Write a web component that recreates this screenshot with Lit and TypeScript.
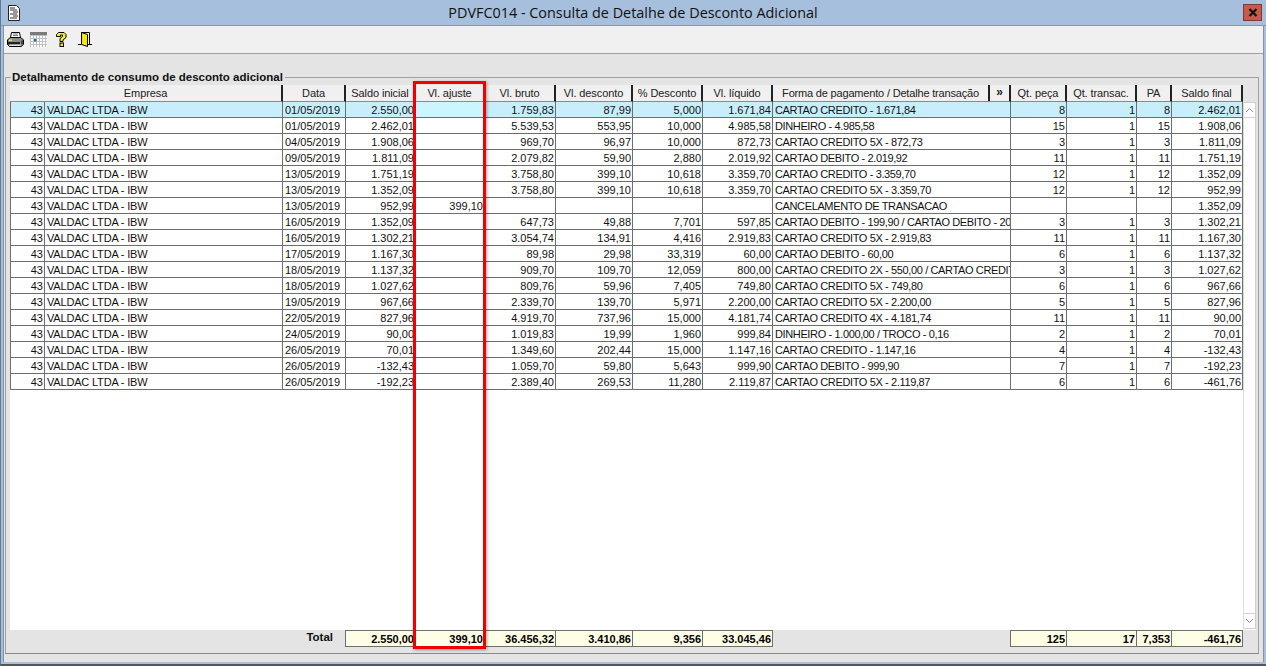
import { LitElement, html, css, svg } from "lit";
import { customElement } from "lit/decorators.js";

type R = string[];
const E = "VALDAC LTDA - IBW";
const rows: R[] = [
  ["01/05/2019","2.550,00","","1.759,83","87,99","5,000","1.671,84","CARTAO CREDITO - 1.671,84","8","1","8","2.462,01"],
  ["01/05/2019","2.462,01","","5.539,53","553,95","10,000","4.985,58","DINHEIRO - 4.985,58","15","1","15","1.908,06"],
  ["04/05/2019","1.908,06","","969,70","96,97","10,000","872,73","CARTAO CREDITO 5X - 872,73","3","1","3","1.811,09"],
  ["09/05/2019","1.811,09","","2.079,82","59,90","2,880","2.019,92","CARTAO DEBITO - 2.019,92","11","1","11","1.751,19"],
  ["13/05/2019","1.751,19","","3.758,80","399,10","10,618","3.359,70","CARTAO CREDITO - 3.359,70","12","1","12","1.352,09"],
  ["13/05/2019","1.352,09","","3.758,80","399,10","10,618","3.359,70","CARTAO CREDITO 5X - 3.359,70","12","1","12","952,99"],
  ["13/05/2019","952,99","399,10","","","","","CANCELAMENTO DE TRANSACAO","","","","1.352,09"],
  ["16/05/2019","1.352,09","","647,73","49,88","7,701","597,85","CARTAO DEBITO - 199,90 / CARTAO DEBITO - 200,00","3","1","3","1.302,21"],
  ["16/05/2019","1.302,21","","3.054,74","134,91","4,416","2.919,83","CARTAO CREDITO 5X - 2.919,83","11","1","11","1.167,30"],
  ["17/05/2019","1.167,30","","89,98","29,98","33,319","60,00","CARTAO DEBITO - 60,00","6","1","6","1.137,32"],
  ["18/05/2019","1.137,32","","909,70","109,70","12,059","800,00","CARTAO CREDITO 2X - 550,00 / CARTAO CREDITO","3","1","3","1.027,62"],
  ["18/05/2019","1.027,62","","809,76","59,96","7,405","749,80","CARTAO CREDITO 5X - 749,80","6","1","6","967,66"],
  ["19/05/2019","967,66","","2.339,70","139,70","5,971","2.200,00","CARTAO CREDITO 5X - 2.200,00","5","1","5","827,96"],
  ["22/05/2019","827,96","","4.919,70","737,96","15,000","4.181,74","CARTAO CREDITO 4X - 4.181,74","11","1","11","90,00"],
  ["24/05/2019","90,00","","1.019,83","19,99","1,960","999,84","DINHEIRO - 1.000,00 / TROCO - 0,16","2","1","2","70,01"],
  ["26/05/2019","70,01","","1.349,60","202,44","15,000","1.147,16","CARTAO CREDITO - 1.147,16","4","1","4","-132,43"],
  ["26/05/2019","-132,43","","1.059,70","59,80","5,643","999,90","CARTAO DEBITO - 999,90","7","1","7","-192,23"],
  ["26/05/2019","-192,23","","2.389,40","269,53","11,280","2.119,87","CARTAO CREDITO 5X - 2.119,87","6","1","6","-461,76"],
];
const heads = ["Saldo inicial","Vl. ajuste","Vl. bruto","Vl. desconto","% Desconto","Vl. líquido"];
const heads2 = ["Qt. peça","Qt. transac.","PA","Saldo final"];

const printerIcon = svg`<svg width="17" height="15" viewBox="0 0 17 15"><path d="M4.500 .5h8l1 5h-10z" fill="#fff" stroke="#000"/><path d="M6 2h5M6 3.500h5" stroke="#777"/><path d="M3 5.500H14L16.500 8V12.500L14 14.500H2.500L.5 12.500V8z" fill="#8d8d8d" stroke="#000"/><path d="M1 10h12v2.500H1z" fill="#222"/><path d="M2 7.500h3v1.500H2z" fill="#f0e040"/><path d="M2.500 12.500h11v1.500h-11z" fill="#e2e2e2"/><path d="M14 8.500h2v3.500h-2z" fill="#444"/></svg>`;
const calIcon = svg`<svg width="17" height="15" viewBox="0 0 17 15"><rect width="17" height="15" fill="#fff"/><rect width="17" height="3" fill="#7a7a7a"/><path d="M0 3.500h17M0 6.500h17M0 9.500h17M0 12.500h17M.5 3v12M3.500 3v12M6.500 3v12M9.500 3v12M12.500 3v12M15.500 3v12" stroke="#c0c0c0" fill="none"/><rect x="4" y="7" width="2.500" height="2.500" fill="#1f6f9f"/></svg>`;
const helpIcon = svg`<svg width="11" height="15" viewBox="0 0 11 15"><path d="M.5 4.500V2.500L2.500 .5H8L10 2.500V5.500L7 8V9.500H4V6.500L6.500 4.500V3H4.500V4.500z" fill="#f6ee2a" stroke="#000"/><rect x="4" y="11" width="3.500" height="3.500" fill="#f6ee2a" stroke="#000"/></svg>`;
const doorIcon = svg`<svg width="14" height="15" viewBox="0 0 14 15"><path d="M3.500 12.500V.5H11.500V12.500" fill="#fffbb0" stroke="#000"/><path d="M3.500 .5L9.500 2.500V14.500L3.500 12.500z" fill="#f6e800" stroke="#000"/><path d="M0 12.500H3M10 12.500H14" stroke="#000"/></svg>`;
const docIcon = svg`<svg width="12" height="16" viewBox="0 0 12 16"><path d="M.5.5H8.500L11.500 3.500V15.500H.5z" fill="#fff" stroke="#222"/><path d="M2 3h5M2 5h7M5 7h5M2 9h7M5 11h5M2 13h7" stroke="#333" stroke-width="1.200"/></svg>`;
const closeIcon = svg`<svg width="10" height="9" viewBox="0 0 10 9"><path d="M1.500 1L8.500 8M8.500 1L1.500 8" stroke="#111" stroke-width="2.200" fill="none"/></svg>`;
const chevUp = svg`<svg width="9" height="6" viewBox="0 0 9 6"><path d="M1 5L4.500 1.500L8 5" stroke="#8a8a8a" fill="none"/></svg>`;
const chevDown = svg`<svg width="9" height="6" viewBox="0 0 9 6"><path d="M1 1L4.500 4.500L8 1" stroke="#8a8a8a" fill="none"/></svg>`;

@customElement("app-root")
export class AppRoot extends LitElement {
  static styles = css`
    :host { display: block; width: 1266px; height: 666px; font-family: "Liberation Sans", Arial, sans-serif; font-size: 11px; color: #000; overflow: hidden; position: relative; }
    .window { box-sizing: border-box; width: 1266px; height: 666px; display: flex; flex-direction: column; background: #a6bfdc; border-bottom: 2px solid #555; border-left: 1px solid #5f7a96; }
    .title { height: 25px; flex: none; display: flex; align-items: center; padding: 0 4px 0 7px; border-bottom: 1px solid #8b9299; }
    .title .ic { width: 12px; height: 16px; display: block; }
    .title .t { flex: 1; text-align: center; font-family: "Open Sans", sans-serif; font-size: 14.4px; color: #111; padding-left: 3px; }
    .close { width: 19px; height: 17px; background: #c75a4a; border: 1px solid #7e3a30; box-sizing: border-box; display: flex; align-items: center; justify-content: center; }
    .body { flex: 1; margin: 0 2px 2px 2px; display: flex; flex-direction: column; background: #e4e4e4; border-left: 1px solid #8b9299; border-right: 1px solid #8b9299; min-height: 0; }
    .toolbar { height: 27px; flex: none; background: #f0f0f0; border-bottom: 1px solid #a0a0a0; display: flex; align-items: center; padding-left: 3px; }
    .toolbar span { display: flex; align-items: center; justify-content: center; }
    .tb1 { width: 17px; } .tb2 { width: 17px; margin-left: 6px; } .tb3 { width: 11px; margin-left: 9px; } .tb4 { width: 14px; margin-left: 11px; }
    .group { flex: 1; position: relative; margin: 23px 4px 8px 1px; border: 1px solid #a0a0a0; border-bottom-color: #8a8a8a; display: flex; flex-direction: column; padding: 7px 0 0 4px; min-height: 0; }
    .legend { position: absolute; left: 5px; top: -7px; background: #e4e4e4; padding: 0 2px 0 1px; font-weight: bold; font-size: 11.5px; line-height: 13px; color: #111; }
    .hdr, .row, .tot { display: grid; grid-template-columns: 35px 238px 63px 70px 69px 71px 77px 70px 70px 238px 56px 70px 35px 71px; width: 1233px; }
    .hdr { height: 17px; flex: none; }
    .h { box-sizing: border-box; height: 17px; background: #f0f0f0; border-right: 2px solid #222; border-bottom: 1px solid #8a8a8a; text-align: center; line-height: 17px; color: #222; white-space: nowrap; overflow: hidden; letter-spacing: -0.1px; }
    .h.emp { grid-column: span 2; }
    .h.forma { display: flex; }
    .h.forma .lbl { width: 217px; box-sizing: border-box; border-right: 2px solid #222; flex: none; letter-spacing: -0.18px; }
    .h.forma .more { flex: 1; font-weight: bold; font-size: 12px; line-height: 14px; }
    .white { flex: 1; background: #fff; width: 1246px; display: flex; min-height: 0; }
    .rows { width: 1233px; flex: none; }
    .row { height: 16px; }
    .c { box-sizing: border-box; height: 16px; border-right: 1px solid #6e6e6e; border-bottom: 1px solid #6e6e6e; line-height: 17px; padding: 0 1px 0 2px; white-space: nowrap; overflow: hidden; color: #111; }
    .r { text-align: right; }
    .emp-c { letter-spacing: -0.18px; }
    .forma-c { letter-spacing: -0.37px; }
    .row.sel .c { background: #c8eefc; }
    .row .c:first-child { border-left: 1px solid #6e6e6e; }
    .row.sel .cur { border-right: 2px solid #111; background: #ccf6ff; }
    .scroll { width: 13px; flex: none; display: flex; flex-direction: column; justify-content: space-between; border-left: 1px solid #dcdcdc; border-right: 1px solid #cfcfcf; box-sizing: border-box; height: 527px; }
    .scroll div { height: 16px; display: flex; align-items: center; justify-content: center; border-top: 1px solid #d0d0d0; border-bottom: 1px solid #d0d0d0; box-sizing: border-box; }
    .totals { height: 23px; flex: none; }
    .tot { height: 17px; font-weight: bold; }
    .tv { box-sizing: border-box; height: 17px; background: #fefee6; border: 1px solid #6e6e6e; border-left: none; line-height: 16px; text-align: right; padding-right: 1px; white-space: nowrap; }
    .tv.start { border-left: 1px solid #6e6e6e; margin-left: -1px; }
    .tl { text-align: right; padding-right: 13px; line-height: 14px; font-size: 11.5px; color: #111; grid-column: 1 / span 3; }
    .redbox { position: absolute; left: 413px; top: 81px; width: 73px; height: 568px; box-sizing: border-box; border: 3px solid #f00000; box-shadow: 1px 1px 3px rgba(0,0,0,.35); pointer-events: none; }
  `;

  render() {
    return html`
      <div class="window">
        <div class="title">
          <span class="ic">${docIcon}</span>
          <span class="t">PDVFC014 - Consulta de Detalhe de Desconto Adicional</span>
          <span class="close">${closeIcon}</span>
        </div>
        <div class="body">
          <div class="toolbar">
            <span class="tb1">${printerIcon}</span>
            <span class="tb2">${calIcon}</span>
            <span class="tb3">${helpIcon}</span>
            <span class="tb4">${doorIcon}</span>
          </div>
          <div class="group">
            <div class="legend">Detalhamento de consumo de desconto adicional</div>
            <div class="hdr">
              <div class="h emp">Empresa</div>
              <div class="h">Data</div>
              ${heads.map((h) => html`<div class="h">${h}</div>`)}
              <div class="h forma"><div class="lbl">Forma de pagamento / Detalhe transação</div><div class="more">»</div></div>
              ${heads2.map((h) => html`<div class="h">${h}</div>`)}
            </div>
            <div class="white">
              <div class="rows">
                ${rows.map((r, i) => html`
                  <div class="row ${i === 0 ? "sel" : ""}">
                    <div class="c r">43</div>
                    <div class="c emp-c">${E}</div>
                    <div class="c">${r[0]}</div>
                    ${r.slice(1, 7).map((v, j) => html`<div class="c r ${j === 1 ? "cur" : ""}">${v}</div>`)}
                    <div class="c forma-c">${r[7]}</div>
                    ${r.slice(8).map((v) => html`<div class="c r">${v}</div>`)}
                  </div>`)}
              </div>
              <div class="scroll"><div>${chevUp}</div><div>${chevDown}</div></div>
            </div>
            <div class="totals">
              <div class="tot">
                <div class="tl">Total</div>
                <div class="tv start">2.550,00</div>
                <div class="tv">399,10</div>
                <div class="tv">36.456,32</div>
                <div class="tv">3.410,86</div>
                <div class="tv">9,356</div>
                <div class="tv">33.045,46</div>
                <div></div>
                <div class="tv start">125</div>
                <div class="tv">17</div>
                <div class="tv">7,353</div>
                <div class="tv">-461,76</div>
              </div>
            </div>
          </div>
        </div>
      </div>
      <div class="redbox"></div>
    `;
  }
}
